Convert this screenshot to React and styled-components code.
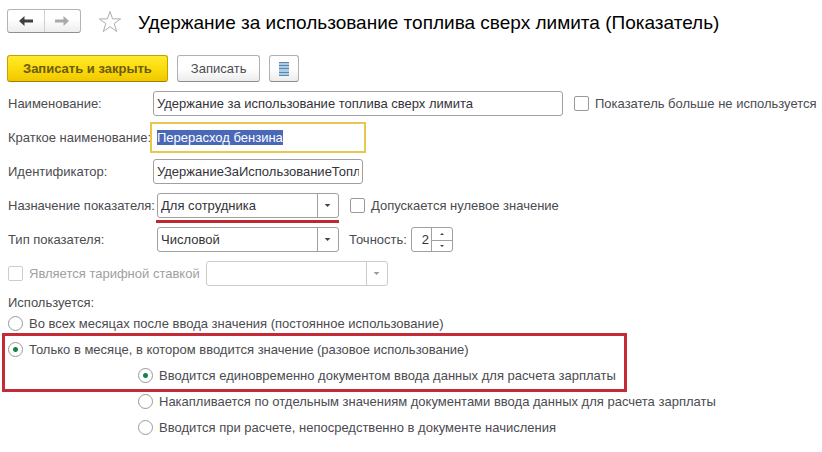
import React, { useEffect, useRef, useState } from "react";
import styled, { createGlobalStyle } from "styled-components";

const GlobalStyle = createGlobalStyle`
  *,
  *::before,
  *::after {
    box-sizing: border-box;
  }

  body {
    margin: 0;
    background: #fff;
    color: #4b4b50;
    font-family: "Liberation Sans", Arial, sans-serif;
    font-size: 13px;
    line-height: 15px;
  }

  button,
  input,
  select {
    font: inherit;
    color: inherit;
  }
`;

const Page = styled.main`
  padding: 9px 7px 12px;
`;

const Header = styled.header`
  display: flex;
  align-items: center;
  height: 24px;
`;

const NavGroup = styled.div`
  display: flex;
  width: 74px;
  height: 24px;
  border: 1px solid #b4b4b4;
  border-bottom-color: #8f8f8f;
  border-radius: 3px;
  background: linear-gradient(#fff 40%, #ededed);
`;

const NavButton = styled.button`
  display: flex;
  flex: 1;
  align-items: center;
  justify-content: center;
  padding: 0;
  border: 0;
  background: none;
  color: ${({ $muted }) => ($muted ? "#a9a9a9" : "#404040")};

  + button {
    border-left: 1px solid #cfcfcf;
  }
`;

const StarButton = styled.button`
  display: flex;
  margin-left: 17px;
  padding: 0;
  border: 0;
  background: none;
`;

const Title = styled.h1`
  margin: 3px 0 0 16px;
  color: #000;
  font-size: 19px;
  font-weight: 400;
  line-height: 24px;
  white-space: nowrap;
`;

const Toolbar = styled.div`
  display: flex;
  gap: 9px;
  margin-top: 22px;
`;

const Button = styled.button`
  display: flex;
  align-items: center;
  justify-content: center;
  height: 27px;
  padding: 0 ${({ $primary }) => ($primary ? "15px" : "13px")};
  border: 1px solid ${({ $primary }) => ($primary ? "#c3a100" : "#b0b0b0")};
  border-bottom-color: ${({ $primary }) => ($primary ? "#9c8100" : "#8c8c8c")};
  border-radius: 3px;
  background: ${({ $primary }) =>
    $primary
      ? "linear-gradient(#ffea2e, #fbdc0c 50%, #f0c800)"
      : "linear-gradient(#fff 50%, #ececec)"};
  color: ${({ $primary }) => ($primary ? "#6b5a10" : "#4b4b50")};
  font-weight: ${({ $primary }) => ($primary ? 700 : 400)};
  white-space: nowrap;
`;

const IconButton = styled(Button)`
  width: 30px;
  padding: 0;
`;

const Form = styled.form`
  display: flex;
  flex-direction: column;
  gap: 9px;
  margin-top: 9px;
`;

const Row = styled.div`
  display: flex;
  align-items: center;
  height: 25px;
  padding-left: 1px;
  white-space: nowrap;
`;

const Label = styled.label`
  flex: none;
  width: ${({ $wide }) => ($wide ? "149px" : "145px")};
`;

const TextInput = styled.input`
  flex: none;
  width: ${({ $long }) => ($long ? "410px" : "210px")};
  height: 25px;
  padding: 0 3px;
  border: 1px solid #a0a0a0;
  border-radius: 3px;
  background: #fff;
  color: #333338;

  &:focus {
    border-color: transparent;
    border-radius: 0;
    outline: 2px solid #e8c84c;
    outline-offset: 1px;
  }

  &::selection {
    background: #4a68b8;
    color: #fff;
  }
`;

const CheckLabel = styled.label`
  display: flex;
  align-items: center;
  gap: 6px;
  margin-left: 11px;
  color: ${({ $disabled }) => ($disabled ? "#a0a0a0" : "inherit")};

  &:first-child {
    margin-left: 0;
  }
`;

const Checkbox = styled.input`
  appearance: none;
  width: 15px;
  height: 15px;
  margin: 0;
  border: 1px solid #999;
  border-radius: 2px;
  background: #fff;

  &:checked {
    background: #1a8a50;
  }

  &:disabled {
    border-color: #ccc;
  }
`;

const SelectBox = styled.div`
  position: relative;
  display: flex;
  width: 182px;
  height: 25px;
  margin-left: ${({ $spaced }) => ($spaced ? "6px" : "0")};
  border: 1px solid ${({ $disabled }) => ($disabled ? "#ccc" : "#a0a0a0")};
  border-radius: 3px;
  color: ${({ $disabled }) => ($disabled ? "#999" : "#444")};

  svg {
    position: absolute;
    top: 0;
    right: 0;
    width: 21px;
    height: 23px;
    border-left: 1px solid ${({ $disabled }) => ($disabled ? "#ccc" : "#a0a0a0")};
    pointer-events: none;
  }
`;

const MarkedSelectBox = styled(SelectBox)`
  &::after {
    content: "";
    position: absolute;
    right: -1px;
    bottom: -6px;
    left: -2px;
    height: 3px;
    background: #c0282f;
  }
`;

const Select = styled.select`
  appearance: none;
  width: 100%;
  padding: 0 24px 0 3px;
  border: 0;
  border-radius: 3px;
  outline: 0;
  background: transparent;
  color: #333338;
`;

const PrecisionLabel = styled.label`
  margin: 0 4px 0 10px;
`;

const Stepper = styled.div`
  display: flex;
  width: 42px;
  height: 25px;
  border: 1px solid #a0a0a0;
  border-radius: 3px;
`;

const StepperInput = styled.input`
  width: 19px;
  padding: 0 2px 0 0;
  border: 0;
  outline: 0;
  background: transparent;
  color: #333338;
  text-align: right;
`;

const StepperButtons = styled.div`
  display: grid;
  flex: 1;
  grid-template-rows: 1fr 1fr;
  border-left: 1px solid #a0a0a0;
`;

const StepButton = styled.button`
  display: flex;
  align-items: center;
  justify-content: center;
  min-height: 0;
  padding: 0;
  border: 0;
  background: none;
  color: #444;

  + button {
    border-top: 1px solid #a0a0a0;
  }
`;

const Usage = styled.fieldset`
  min-width: 0;
  margin: 0;
  padding: 0 0 0 1px;
  border: 0;
`;

const Legend = styled.legend`
  padding: 0;
`;

const RadioLabel = styled.label`
  display: flex;
  align-items: center;
  gap: 6px;
  width: fit-content;
  height: 26px;
  margin-left: ${({ $nested }) => ($nested ? "130px" : "0")};
  white-space: nowrap;
`;

const Radio = styled.input`
  appearance: none;
  width: 15px;
  height: 15px;
  margin: 0;
  border: 1px solid #999;
  border-radius: 50%;
  background: #fff;

  &:checked {
    background: radial-gradient(circle, #15834a 2px, #fff 3px);
  }
`;

const Highlight = styled.div`
  position: relative;
  width: fit-content;
  padding-right: 8px;

  &::after {
    content: "";
    position: absolute;
    inset: -3px -3px -4px -6px;
    border: 3px solid #c42b36;
    pointer-events: none;
  }
`;

const ArrowIcon = ({ flipped }) => (
  <svg width="14" height="10" viewBox="0 0 14 10" aria-hidden="true">
    <path
      d={
        flipped
          ? "M14 5 8.5 0v3.5H0v3h8.5V10z"
          : "M0 5 5.5 0v3.5H14v3H5.5V10z"
      }
      fill="currentColor"
    />
  </svg>
);

const StarIcon = () => (
  <svg width="24" height="24" viewBox="0 0 24 24" aria-hidden="true">
    <path
      d="M12 2.5 14.6 9.9H22.6L16.2 14.6 18.7 22.5 12 17.7 5.3 22.5 7.8 14.6 1.4 9.9H9.4z"
      fill="#fff"
      stroke="#adadad"
    />
  </svg>
);

const ListIcon = () => (
  <svg width="10" height="14" viewBox="0 0 10 14" aria-hidden="true">
    <path d="M0 0h10v14H0z" fill="#a9cbe8" />
    <path
      d="M0 .5h10M0 3.5h10M0 6.5h10M0 10.5h10M0 13.5h10"
      stroke="#5d86a8"
    />
  </svg>
);

const DropIcon = () => (
  <svg viewBox="0 0 21 23" aria-hidden="true">
    <path d="M7 10h6l-3 3z" fill="currentColor" />
  </svg>
);

const StepIcon = ({ down }) => (
  <svg width="4" height="2" viewBox="0 0 4 2" aria-hidden="true">
    <path d={down ? "M0 0h4L2 2z" : "M0 2h4L2 0z"} fill="currentColor" />
  </svg>
);

const RadioOption = ({ name, checked, onSelect, nested, children }) => (
  <RadioLabel $nested={nested}>
    <Radio type="radio" name={name} checked={checked} onChange={onSelect} />
    {children}
  </RadioLabel>
);

const App = () => {
  const shortName = useRef(null);
  const [precision, setPrecision] = useState(2);
  const [period, setPeriod] = useState("once");
  const [entry, setEntry] = useState("single");

  useEffect(() => {
    shortName.current.focus();
    shortName.current.select();
  }, []);

  return (
    <Page>
      <GlobalStyle />
      <Header>
        <NavGroup>
          <NavButton type="button" aria-label="Назад">
            <ArrowIcon />
          </NavButton>
          <NavButton type="button" aria-label="Вперед" $muted>
            <ArrowIcon flipped />
          </NavButton>
        </NavGroup>
        <StarButton type="button" aria-label="Избранное">
          <StarIcon />
        </StarButton>
        <Title>Удержание за использование топлива сверх лимита (Показатель)</Title>
      </Header>

      <Toolbar>
        <Button type="button" $primary>
          Записать и закрыть
        </Button>
        <Button type="button">Записать</Button>
        <IconButton type="button" aria-label="Список">
          <ListIcon />
        </IconButton>
      </Toolbar>

      <Form onSubmit={(e) => e.preventDefault()}>
        <Row>
          <Label htmlFor="name">Наименование:</Label>
          <TextInput
            id="name"
            $long
            defaultValue="Удержание за использование топлива сверх лимита"
          />
          <CheckLabel>
            <Checkbox type="checkbox" />
            Показатель больше не используется
          </CheckLabel>
        </Row>
        <Row>
          <Label htmlFor="shortName">Краткое наименование:</Label>
          <TextInput
            id="shortName"
            ref={shortName}
            defaultValue="Перерасход бензина"
          />
        </Row>
        <Row>
          <Label htmlFor="identifier">Идентификатор:</Label>
          <TextInput
            id="identifier"
            defaultValue="УдержаниеЗаИспользованиеТоплива"
          />
        </Row>
        <Row>
          <Label htmlFor="purpose" $wide>
            Назначение показателя:
          </Label>
          <MarkedSelectBox>
            <Select id="purpose">
              <option>Для сотрудника</option>
            </Select>
            <DropIcon />
          </MarkedSelectBox>
          <CheckLabel>
            <Checkbox type="checkbox" />
            Допускается нулевое значение
          </CheckLabel>
        </Row>
        <Row>
          <Label htmlFor="type" $wide>
            Тип показателя:
          </Label>
          <SelectBox>
            <Select id="type">
              <option>Числовой</option>
            </Select>
            <DropIcon />
          </SelectBox>
          <PrecisionLabel htmlFor="precision">Точность:</PrecisionLabel>
          <Stepper>
            <StepperInput
              id="precision"
              inputMode="numeric"
              value={precision}
              onChange={(e) => setPrecision(Number(e.target.value) || 0)}
            />
            <StepperButtons>
              <StepButton
                type="button"
                aria-label="Увеличить"
                onClick={() => setPrecision(precision + 1)}
              >
                <StepIcon />
              </StepButton>
              <StepButton
                type="button"
                aria-label="Уменьшить"
                onClick={() => setPrecision(Math.max(0, precision - 1))}
              >
                <StepIcon down />
              </StepButton>
            </StepperButtons>
          </Stepper>
        </Row>
        <Row>
          <CheckLabel $disabled>
            <Checkbox type="checkbox" disabled />
            Является тарифной ставкой
          </CheckLabel>
          <SelectBox $disabled $spaced>
            <Select aria-label="Тарифная ставка" disabled />
            <DropIcon />
          </SelectBox>
        </Row>

        <Usage>
          <Legend>Используется:</Legend>
          <RadioOption
            name="period"
            checked={period === "always"}
            onSelect={() => setPeriod("always")}
          >
            Во всех месяцах после ввода значения (постоянное использование)
          </RadioOption>
          <Highlight>
            <RadioOption
              name="period"
              checked={period === "once"}
              onSelect={() => setPeriod("once")}
            >
              Только в месяце, в котором вводится значение (разовое использование)
            </RadioOption>
            <RadioOption
              name="entry"
              nested
              checked={entry === "single"}
              onSelect={() => setEntry("single")}
            >
              Вводится единовременно документом ввода данных для расчета зарплаты
            </RadioOption>
          </Highlight>
          <RadioOption
            name="entry"
            nested
            checked={entry === "sum"}
            onSelect={() => setEntry("sum")}
          >
            Накапливается по отдельным значениям документами ввода данных для расчета зарплаты
          </RadioOption>
          <RadioOption
            name="entry"
            nested
            checked={entry === "calc"}
            onSelect={() => setEntry("calc")}
          >
            Вводится при расчете, непосредственно в документе начисления
          </RadioOption>
        </Usage>
      </Form>
    </Page>
  );
};

export default App;
